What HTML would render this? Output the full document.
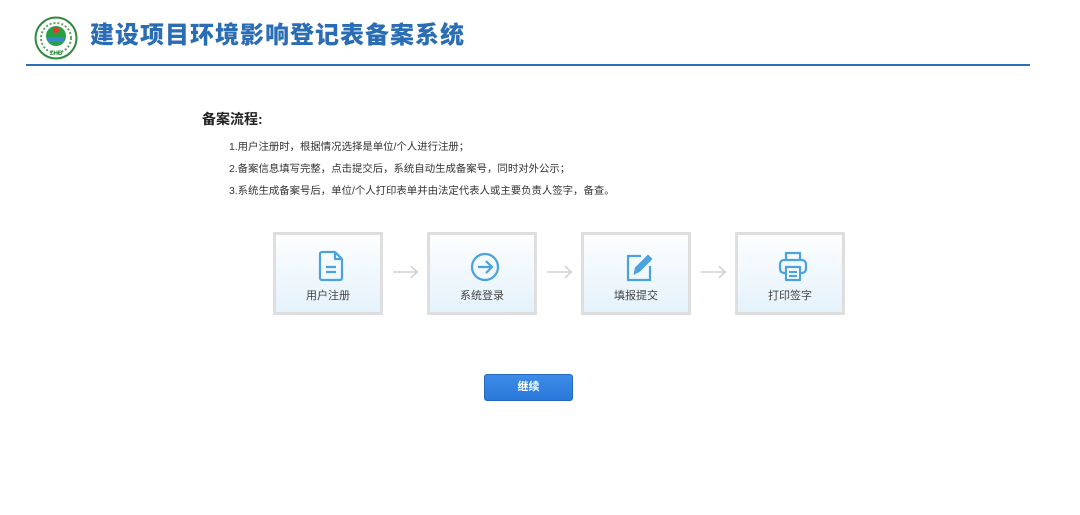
<!DOCTYPE html>
<html><head><meta charset="utf-8"><style>
*{margin:0;padding:0;box-sizing:border-box}
body{width:1080px;height:515px;background:#fff;font-family:"Liberation Sans","Noto Sans CJK SC",sans-serif;position:relative;overflow:hidden;color:#333}
.title{position:absolute;left:90px;top:19px;font-size:24px;font-weight:900;color:#2a6db5;letter-spacing:1px;line-height:34px}
.line{position:absolute;left:26px;top:64px;width:1004px;height:2px;background:#2a6fba}
h3{position:absolute;left:202px;top:109px;font-size:14px;font-weight:bold;color:#222}
.li{position:absolute;left:229px;font-size:10.4px;color:#333;line-height:14px}
.box{position:absolute;top:232px;width:110px;height:83px;border:3px solid #dedede;background:linear-gradient(#fdfeff,#e4f2fb)}
.box svg{position:absolute;left:39px;top:14px}
.box span{position:absolute;left:0;right:0;top:52px;text-align:center;font-size:11px;color:#444}
.arr{position:absolute;top:265px}
.btn{position:absolute;left:484px;top:374px;width:89px;height:27px;border-radius:3px;background:linear-gradient(#3c8ce8,#2a78da);border:1px solid #2568c0;color:#fff;font-size:11px;font-weight:bold;text-align:center;line-height:25px}
</style></head><body>
<svg style="position:absolute;left:34px;top:16px" width="44" height="44" viewBox="0 0 44 44">
<circle cx="22" cy="22" r="20.5" fill="#fff" stroke="#2f8a3c" stroke-width="2"/>
<circle cx="22" cy="22" r="15" fill="none" stroke="#5aa55f" stroke-width="2" stroke-dasharray="2 2"/>
<circle cx="22" cy="20" r="10" fill="#27a045"/>
<circle cx="22" cy="14" r="3" fill="#e33"/>
<rect x="14" y="21" width="16" height="5" fill="#3a87cf"/>
<text x="22" y="39" font-size="6" font-weight="bold" text-anchor="middle" fill="#2f8a3c" font-family="Liberation Sans">ZHB</text>
</svg>
<div class="title">建设项目环境影响登记表备案系统</div>
<div class="line"></div>
<h3>备案流程:</h3>
<div class="li" style="top:141px">1.用户注册时，根据情况选择是单位/个人进行注册；</div>
<div class="li" style="top:163px">2.备案信息填写完整，点击提交后，系统自动生成备案号，同时对外公示；</div>
<div class="li" style="top:185px">3.系统生成备案号后，单位/个人打印表单并由法定代表人或主要负责人签字，备查。</div>

<div class="box" style="left:273px"><svg width="32" height="34" viewBox="0 0 32 34" fill="none" stroke="#4aa3e0" stroke-width="2.2" stroke-linejoin="round"><path d="M7 3h13l7 7v19a2 2 0 0 1-2 2H7a2 2 0 0 1-2-2V5a2 2 0 0 1 2-2z"/><path d="M20 3v7h7"/><path d="M11 18h10M11 23h10"/></svg><span>用户注册</span></div>
<svg class="arr" style="left:392px" width="28" height="14" viewBox="0 0 28 14" fill="none" stroke="#d0d0d0" stroke-width="1.5"><path d="M1 7h25M19 1l6 6-6 6"/></svg>
<div class="box" style="left:427px"><svg width="32" height="34" viewBox="0 0 32 34" fill="none" stroke="#4aa3e0" stroke-width="2.2"><circle cx="16" cy="18" r="13"/><path d="M9 18h13M17 12l6 6-6 6"/></svg><span>系统登录</span></div>
<svg class="arr" style="left:546px" width="28" height="14" viewBox="0 0 28 14" fill="none" stroke="#d0d0d0" stroke-width="1.5"><path d="M1 7h25M19 1l6 6-6 6"/></svg>
<div class="box" style="left:581px"><svg width="32" height="34" viewBox="0 0 32 34" fill="none" stroke="#4aa3e0" stroke-width="2.2"><path d="M18 7H5v24h22V17"/><path d="M12 24l1-5 12-12 3 3-12 12z" fill="#4aa3e0"/></svg><span>填报提交</span></div>
<svg class="arr" style="left:700px" width="28" height="14" viewBox="0 0 28 14" fill="none" stroke="#d0d0d0" stroke-width="1.5"><path d="M1 7h25M19 1l6 6-6 6"/></svg>
<div class="box" style="left:735px"><svg width="32" height="34" viewBox="0 0 32 34" fill="none" stroke="#4aa3e0" stroke-width="2.2" stroke-linejoin="round"><path d="M9 11V4h14v7"/><rect x="3" y="11" width="26" height="13" rx="4"/><rect x="9" y="18" width="14" height="13" fill="#fff"/><path d="M12 23h8M12 27h8"/></svg><span>打印签字</span></div>

<div class="btn">继续</div>
</body></html>
